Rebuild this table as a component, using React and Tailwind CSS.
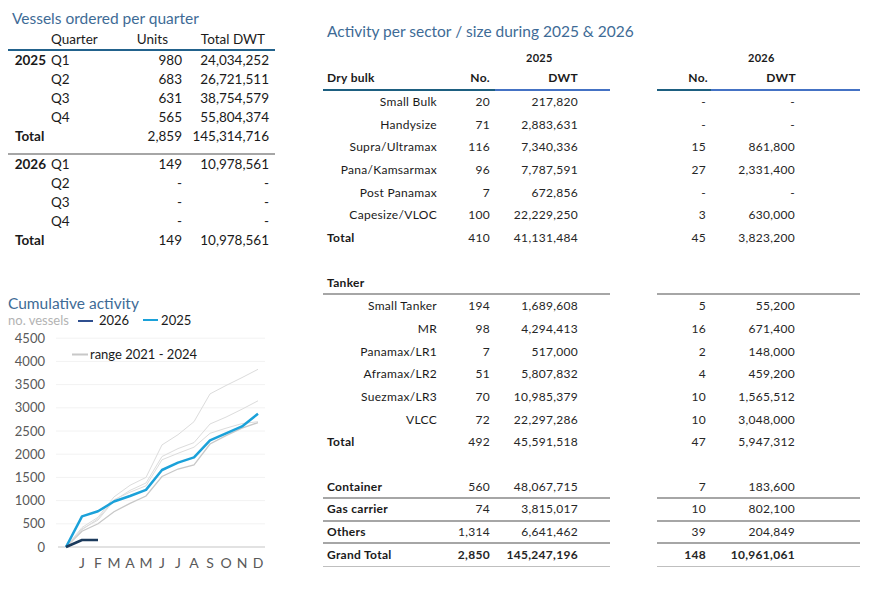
import React from "react";

const font = { fontFamily: "Lato, 'Open Sans', sans-serif" };

const q2025 = [
  ["2025", "Q1", "980", "24,034,252"],
  ["", "Q2", "683", "26,721,511"],
  ["", "Q3", "631", "38,754,579"],
  ["", "Q4", "565", "55,804,374"],
];
const q2026 = [
  ["2026", "Q1", "149", "10,978,561"],
  ["", "Q2", "-", "-"],
  ["", "Q3", "-", "-"],
  ["", "Q4", "-", "-"],
];

function QRow({ r }) {
  return (
    <div className="flex h-[19px] items-center">
      <div className="w-[38px] text-right font-bold">{r[0]}</div>
      <div className="w-[74px] pl-[5px]">{r[1]}</div>
      <div className="w-[62px] text-right">{r[2]}</div>
      <div className="w-[87px] text-right">{r[3]}</div>
    </div>
  );
}

function TotalRow({ u, d }) {
  return (
    <div className="flex h-[19px] items-center">
      <div className="w-[112px] pl-[7px] font-bold">Total</div>
      <div className="w-[62px] text-right">{u}</div>
      <div className="w-[87px] text-right">{d}</div>
    </div>
  );
}

function LeftTable() {
  return (
    <div className="text-[13.5px] text-[#1a1a1a] leading-none">
      <div className="flex h-[20px] items-center pt-[1px]">
        <div className="w-[38px]"></div>
        <div className="w-[74px] pl-[5px]">Quarter</div>
        <div className="w-[62px] text-right pr-[14px]">Units</div>
        <div className="w-[87px] text-right pr-[4px]">Total DWT</div>
      </div>
      <div className="h-[2px] w-[267px] bg-[#22628c]"></div>
      {q2025.map((r, i) => (
        <QRow key={i} r={r} />
      ))}
      <TotalRow u="2,859" d="145,314,716" />
      <div className="h-[7px]"></div>
      <div className="h-[2px] w-[267px] bg-[#a6a6a6]"></div>
      {q2026.map((r, i) => (
        <QRow key={i} r={r} />
      ))}
      <TotalRow u="149" d="10,978,561" />
    </div>
  );
}

const X0 = 58;
const DX = 16;
const Y0 = 217;
const SC = 23.2 / 500;
const pts = (arr) =>
  arr.map((v, i) => `${X0 + i * DX},${(Y0 - v * SC).toFixed(1)}`).join(" ");

const s2025 = [0, 660, 770, 980, 1100, 1230, 1660, 1820, 1930, 2300, 2450, 2600, 2870];
const s2026 = [0, 150, 150];
const ranges = [
  [0, 420, 640, 1080, 1330, 1500, 2200, 2420, 2700, 3300, 3480, 3650, 3830],
  [0, 390, 580, 1000, 1220, 1380, 1950, 2120, 2250, 2650, 2800, 2970, 3150],
  [0, 340, 500, 760, 940, 1100, 1520, 1680, 1770, 2220, 2400, 2560, 2680],
  [0, 370, 610, 1020, 1180, 1320, 1880, 2020, 2150, 2450, 2560, 2660, 2700],
];

function Chart() {
  const yl = [4500, 4000, 3500, 3000, 2500, 2000, 1500, 1000, 500, 0];
  const months = ["J", "F", "M", "A", "M", "J", "J", "A", "S", "O", "N", "D"];
  return (
    <svg width="290" height="250" className="block" style={font}>
      {yl.map((v) => (
        <g key={v}>
          {v > 0 && (
            <line x1="48" x2="257" y1={Y0 - v * SC} y2={Y0 - v * SC} stroke="#f2f2f2" strokeWidth="1" />
          )}
          <text x="37" y={Y0 - v * SC + 4.5} textAnchor="end" fontSize="13" fill="#595959">
            {v}
          </text>
        </g>
      ))}
      <line x1="50" x2="257" y1={Y0} y2={Y0} stroke="#d9d9d9" strokeWidth="1.5" />
      {ranges.map((r, i) => (
        <polyline key={i} points={pts(r)} fill="none" stroke={i === 2 ? "#c8c8c8" : "#dcdcdc"} strokeWidth={i === 2 ? 1.3 : 1} />
      ))}
      <polyline points={pts(s2025)} fill="none" stroke="#1ba1d9" strokeWidth="2.5" strokeLinejoin="round" />
      <polyline points={pts(s2026)} fill="none" stroke="#1b3a5c" strokeWidth="2.5" strokeLinejoin="round" />
      {months.map((m, i) => (
        <text key={i} x={X0 + (i + 1) * DX} y="238" textAnchor="middle" fontSize="14" fill="#595959">
          {m}
        </text>
      ))}
      <rect x="64" y="23.5" width="16" height="2" fill="#c8c8c8" />
      <text x="82" y="29" fontSize="13" fill="#1a1a1a">
        range 2021 - 2024
      </text>
    </svg>
  );
}

const dry = [
  ["Small Bulk", "20", "217,820", "-", "-"],
  ["Handysize", "71", "2,883,631", "-", "-"],
  ["Supra/Ultramax", "116", "7,340,336", "15", "861,800"],
  ["Pana/Kamsarmax", "96", "7,787,591", "27", "2,331,400"],
  ["Post Panamax", "7", "672,856", "-", "-"],
  ["Capesize/VLOC", "100", "22,229,250", "3", "630,000"],
];
const tanker = [
  ["Small Tanker", "194", "1,689,608", "5", "55,200"],
  ["MR", "98", "4,294,413", "16", "671,400"],
  ["Panamax/LR1", "7", "517,000", "2", "148,000"],
  ["Aframax/LR2", "51", "5,807,832", "4", "459,200"],
  ["Suezmax/LR3", "70", "10,985,379", "10", "1,565,512"],
  ["VLCC", "72", "22,297,286", "10", "3,048,000"],
];

function SRow({ label, bold, a, b, c, d, line, strong }) {
  const lb =
    line === "gray"
      ? "border-b-2 border-[#a6a6a6]"
      : line === "light"
      ? "border-b border-[#bfbfbf]"
      : "";
  const w = strong ? "font-bold" : "";
  return (
    <div className="flex h-[22.7px]">
      <div className={`flex w-[287px] items-center ${lb}`}>
        <div
          className={`w-[117px] ${bold ? "pl-[4px] text-left font-bold" : "pr-[3px] text-right"}`}
        >
          {label}
        </div>
        <div className={`w-[51px] text-right pr-[1px] text-[#262626] ${w}`}>{a}</div>
        <div className={`w-[89px] text-right pr-[2px] text-[#262626] ${w}`}>{b}</div>
      </div>
      <div className="w-[47px]"></div>
      <div className={`flex w-[203px] items-center ${lb}`}>
        <div className={`w-[50px] text-right pr-[1px] text-[#262626] ${w}`}>{c}</div>
        <div className={`w-[89px] text-right pr-[1px] text-[#262626] ${w}`}>{d}</div>
      </div>
    </div>
  );
}

function RightTable() {
  return (
    <div className="text-[12px] tracking-[0.3px] text-[#1a1a1a] leading-none">
      <div className="flex h-[22px] items-center text-[11px] font-bold">
        <div className="w-[287px] pl-[203px]">2025</div>
        <div className="w-[47px]"></div>
        <div className="w-[203px] pl-[91px]">2026</div>
      </div>
      <div className="flex h-[22.7px]">
        <div className="flex w-[287px] flex-col">
          <div className="flex flex-1 items-center font-bold">
            <div className="w-[117px] pl-[4px]">Dry bulk</div>
            <div className="w-[51px] text-right pr-[1px]">No.</div>
            <div className="w-[89px] text-right pr-[2px]">DWT</div>
          </div>
          <div className="flex h-[2px]">
            <div className="w-[172px] bg-[#1d5f80]"></div>
            <div className="flex-1 bg-[#4472c4]"></div>
          </div>
        </div>
        <div className="w-[47px]"></div>
        <div className="flex w-[203px] flex-col">
          <div className="flex flex-1 items-center font-bold">
            <div className="w-[52px] text-right pr-[1px]">No.</div>
            <div className="w-[87px] text-right">DWT</div>
          </div>
          <div className="flex h-[2px]">
            <div className="w-[54px] bg-[#1d5f80]"></div>
            <div className="flex-1 bg-[#4472c4]"></div>
          </div>
        </div>
      </div>
      {dry.map((r, i) => (
        <SRow key={i} label={r[0]} a={r[1]} b={r[2]} c={r[3]} d={r[4]} />
      ))}
      <SRow label="Total" bold a="410" b="41,131,484" c="45" d="3,823,200" />
      <SRow label="" />
      <SRow label="Tanker" bold line="gray" />
      {tanker.map((r, i) => (
        <SRow key={i} label={r[0]} a={r[1]} b={r[2]} c={r[3]} d={r[4]} />
      ))}
      <SRow label="Total" bold a="492" b="45,591,518" c="47" d="5,947,312" />
      <SRow label="" />
      <SRow label="Container" bold a="560" b="48,067,715" c="7" d="183,600" line="gray" />
      <SRow label="Gas carrier" bold a="74" b="3,815,017" c="10" d="802,100" line="gray" />
      <SRow label="Others" bold a="1,314" b="6,641,462" c="39" d="204,849" line="gray" />
      <SRow label="Grand Total" bold strong a="2,850" b="145,247,196" c="148" d="10,961,061" line="light" />
    </div>
  );
}

export default function App() {
  return (
    <div className="flex h-[598px] w-[870px] bg-white" style={font}>
      <div className="w-[315px] pl-[8px]">
        <div className="pt-[9px] pl-[4px] text-[15.5px] leading-[19px] text-[#3e6b96]">
          Vessels ordered per quarter
        </div>
        <div className="mt-[1px]">
          <LeftTable />
        </div>
        <div className="mt-[44px] text-[15.5px] leading-[18px] text-[#3e6b96]">
          Cumulative activity
        </div>
        <div className="flex h-[16px] items-end pb-[1px] text-[13px] leading-none">
          <span className="text-[#b3b3b3]">no. vessels</span>
          <span className="mb-[5px] ml-[9px] inline-block h-[2px] w-[15px] bg-[#2f4f8f]"></span>
          <span className="ml-[6px] text-[#1a1a1a]">2026</span>
          <span className="mb-[6px] ml-[14px] inline-block h-[2px] w-[15px] bg-[#1ba1d9]"></span>
          <span className="ml-[3px] text-[#1a1a1a]">2025</span>
        </div>
        <div className="mt-[2px]">
          <Chart />
        </div>
      </div>
      <div className="pl-[8px]">
        <div className="pl-[4px] pt-[22px] text-[15.5px] leading-[19px] text-[#3e6b96]">
          Activity per sector / size during 2025 &amp; 2026
        </div>
        <div className="mt-[5px]">
          <RightTable />
        </div>
      </div>
    </div>
  );
}
